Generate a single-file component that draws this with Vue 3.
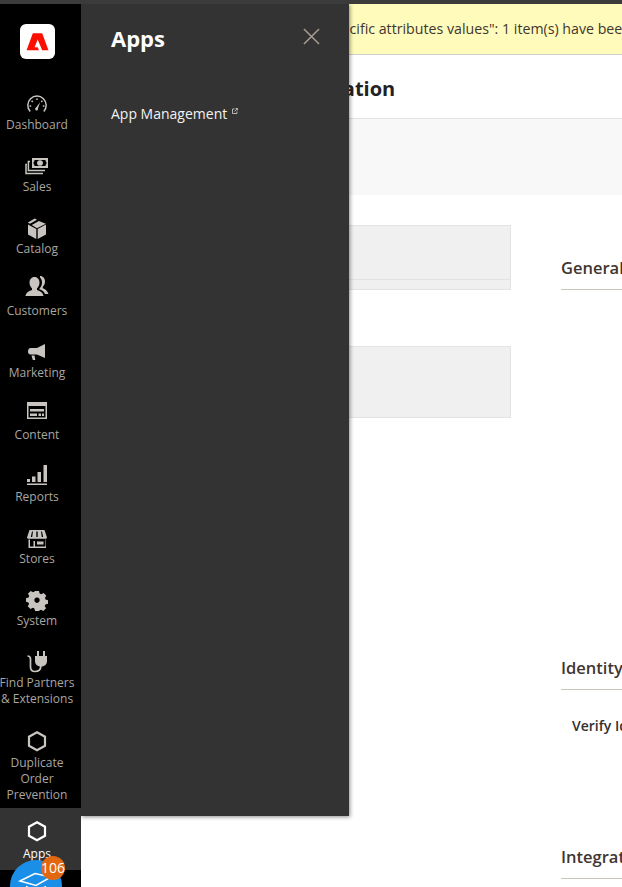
<template>
  <div class="admin">
    <aside class="sidebar">
      <div class="logo">
        <svg viewBox="0 0 24 24" width="25" height="25">
          <path fill="#fa0f00" d="M7.500 4h9l6 16.500h-6l-4.300-10.500-3 7.500h3l1.200 3H1.500z" />
        </svg>
      </div>
      <nav class="menu">
        <a
          v-for="item in menu"
          :key="item.label"
          class="menu-item"
          :class="{ 'is-active': item.active, 'is-tall': item.tall }"
        >
          <svg class="menu-icon" viewBox="0 0 24 24" width="24" height="24">
            <path v-if="item.fill" :d="item.fill" fill="currentColor" fill-rule="evenodd" />
            <path v-if="item.line" :d="item.line" fill="none" stroke="currentColor" :stroke-width="item.sw || 1.5" />
          </svg>
          <span class="menu-label">{{ item.label }}</span>
        </a>
      </nav>
    </aside>

    <main class="content">
      <div class="notice">Task "Update website-specific attributes values": 1 item(s) have been updated</div>
      <h1 class="page-title">Store Configuration</h1>
      <div class="band"></div>
      <div class="columns">
        <div class="col-left">
          <div class="box box-first"><div class="box-foot"></div></div>
          <div class="box box-second"></div>
        </div>
        <div class="col-right">
          <section class="section section-general"><h2>General</h2></section>
          <section class="section section-identity">
            <h2>Identity Verification</h2>
            <div class="field-label">Verify Identity</div>
          </section>
          <section class="section section-integration"><h2>Integration</h2></section>
        </div>
      </div>
    </main>

    <div class="panel">
      <div class="panel-head">
        <strong class="panel-title">Apps</strong>
        <svg class="panel-close" viewBox="0 0 18 18" width="17" height="17">
          <path d="M1 1l16 16M17 1 1 17" fill="none" stroke="#a79d95" stroke-width="1.6" />
        </svg>
      </div>
      <a class="panel-link">
        App Management
        <svg viewBox="0 0 7 7" width="6" height="6" class="ext-icon">
          <path d="M3 1.200H.6v5.200h5.200V4M3 4l3-3M4.200.6h2.200v2.200" fill="none" stroke="#cfcfcf" stroke-width="1" />
        </svg>
      </a>
    </div>

    <div class="fab">
      <svg viewBox="0 0 36 20" width="36" height="20">
        <path d="M2 9 17 1.500 33 5 18 13.500zM8 14.500l10 5 10-5" fill="none" stroke="#fff" stroke-width="1.5" />
      </svg>
    </div>
    <span class="fab-badge">106</span>
  </div>
</template>

<script setup>
const menu = [
  {
    label: 'Dashboard',
    line: 'M5.200 18.500A9.200 9.200 0 1 1 18.800 18.500M12 5.500v1.600M6.600 7.800l1.100 1.100M17.400 7.800l-1.100 1.100M4.600 13h1.600M17.800 13h1.600',
    fill: 'M15.200 9.200 13 15.200a1.500 1.500 0 1 1-2-.6z'
  },
  {
    label: 'Sales',
    fill: 'M7 3h16v10H7zM15 5.200a3 2.800 0 1 0 .01 0zM9.500 5a2 2 0 0 1-1 2v2a2 2 0 0 1 1 2h11a2 2 0 0 1 1-2V7a2 2 0 0 1-1-2z',
    line: 'M5 6.500H3.400v9H20M2 9.500H1v9h17'
  },
  {
    label: 'Catalog',
    fill: 'M3 7.500 11.300 12v10L3 17.500zM21 7.500 12.700 12v10l8.300-4.500zM2.800 5.600 9.800 1.600l2.200 1.200-7 4zM6.800 7.900 13.900 3.900l6.900 2.800-8.800 4.600z'
  },
  {
    label: 'Customers',
    fill: 'M9.500-2c3.200 0 5 2.500 5 5.500 0 2.500-1 4.500-2.500 5.800v1.700c3 1 6 2.500 6.500 6H.5c.5-3.500 3.500-5 6.500-6V9.300C5.500 8 4.500 6 4.500 3.500 4.500.5 6.300-2 9.500-2zM15-3c3 0 5 2.300 5 5.300 0 2.300-.8 4.200-2.200 5.500v1.400c2.500 1 4.700 2.500 5.700 5.800H20c-1-2.500-3-3.800-5.500-4.700V9.500C16 8 17 6 17 3.500c0-2-.7-3.800-2-5z'
  },
  {
    label: 'Marketing',
    fill: 'M20 3v14l-8-3.500H5.500C4 13.500 3 12.300 3 10.500S4 7 5.500 7H12zM6.500 14.500h3l.8 4.500H7.800z'
  },
  {
    label: 'Content',
    fill: 'M2-1h20v17H2zM3.500 3v11.500h17V3zM5 6h14v2.500H5zM5 10.500h7v2.500H5zM13.500 10.500H16V13h-2.500zM17 10.500h2V13h-2z'
  },
  {
    label: 'Reports',
    fill: 'M2 14h3v3H2zM7 11.500h3.500V17H7zM12.500 7H16v10h-3.500zM18.500 0H22v17h-3.500zM2 18.500h20V20H2z'
  },
  {
    label: 'Stores',
    fill: 'M4.500 3h15L22 10.500c0 1-1 1.200-2 1.200H4c-1 0-2-.2-2-1.200zM7 4.500 5.800 10h1.400L8 4.500zM11.300 4.500V10h1.400V4.500zM16 4.500l.8 5.500h1.400L17 4.500zM3.500 12.500H5v7h3.500V14H10v5.500h10.500v-7H21V21H3.500zM12 14.500h6.500v3H12z'
  },
  {
    label: 'System',
    fill: 'M10 2h4l.6 2.600 1.600.7 2.300-1.400 2.800 2.800-1.400 2.300.7 1.600 2.400.6v3.600l-2.600.6-.7 1.600 1.400 2.300-2.800 2.800-2.300-1.400-1.600.7L14 22h-4l-.6-2.600-1.600-.7-2.300 1.400-2.800-2.800 1.400-2.300-.7-1.600L1 12.800V9.200l2.600-.6.700-1.600-1.400-2.300 2.800-2.800L8 3.300l1.600-.7zM12 8.500a2.700 2.700 0 1 0 .01 0z'
  },
  {
    label: 'Find Partners & Extensions',
    fill: 'M12 0h2v5h4V0h2v5h2v5c0 3-2 5.500-6 5.500S10 13 10 10V5h2z',
    line: 'M2.500 5c2 0 3 1 3 3v8c0 3 2 4.500 4.500 4.500 3 0 5.800-1 5.800-5.500',
    sw: 1.7
  },
  {
    label: 'Duplicate Order Prevention',
    line: 'M12 1.200 20 5.700v9.100l-8 4.500-8-4.500V5.700z',
    sw: 2.2,
    tall: true
  },
  {
    label: 'Apps',
    line: 'M12 .2 20 4.700v9.100l-8 4.500-8-4.500V4.700z',
    sw: 2.2,
    active: true
  }
]
</script>

<style>
body {
  margin: 0;
  overflow: hidden;
}
</style>

<style scoped>
.admin {
  position: relative;
  display: flex;
  width: 622px;
  height: 887px;
  overflow: hidden;
  background: #fff;
  font-family: "Open Sans", sans-serif;
  color: #303030;
  border-top: 4px solid #3b3b3b;
  box-sizing: border-box;
}

.sidebar {
  flex: 0 0 81px;
  background: #000;
  position: relative;
  z-index: 3;
}

.logo {
  width: 35px;
  height: 35px;
  margin: 20px 0 20px 20px;
  background: #fff;
  border-radius: 6px;
  display: flex;
  align-items: center;
  justify-content: center;
}

.menu-item {
  display: flex;
  flex-direction: column;
  align-items: center;
  padding: 14px 7px 8px 0;
  color: #aaa6a0;
  font-size: 12px;
  line-height: 16px;
  text-align: center;
}

.menu-item.is-tall {
  padding: 16px 7px 5px 0;
}

.menu-item.is-active {
  background: #333;
  color: #fff;
}

.menu-icon {
  display: block;
  overflow: visible;
}

.menu-item:not(.is-active) .menu-icon {
  color: #c8c5c1;
}

.menu-label {
  display: block;
  margin: 0 -4px;
}

.content {
  flex: 1;
  min-width: 0;
}

.notice {
  height: 50px;
  line-height: 50px;
  padding-left: 98px;
  background: #fffbbb;
  border-bottom: 1px solid #cfcfcf;
  white-space: nowrap;
  font-size: 14.2px;
  color: #41362f;
}

.page-title {
  margin: 0;
  height: 63px;
  line-height: 68px;
  padding-left: 118px;
  font-size: 20px;
  font-weight: 700;
  color: #222;
  white-space: nowrap;
}

.band {
  height: 76px;
  background: #f8f8f8;
  border-top: 1px solid #e3e3e3;
}

.columns {
  display: grid;
  grid-template-columns: 430px 1fr;
  column-gap: 50px;
}

.col-left {
  padding-top: 30px;
}

.box {
  box-sizing: border-box;
  background: #f0f0f0;
  border: 1px solid #e3e3e3;
}

.box-first {
  height: 65px;
  padding-top: 53px;
}

.box-foot {
  border-top: 1px solid #e3e3e3;
}

.box-second {
  height: 72px;
  margin-top: 56px;
}

.col-right {
  white-space: nowrap;
}

.section h2 {
  margin: 0;
  height: 32px;
  line-height: 22px;
  font-size: 16.5px;
  font-weight: 600;
  color: #41362f;
  border-bottom: 1px solid #c9c4bd;
}

.section-general {
  padding-top: 62px;
}

.section-identity {
  padding-top: 367px;
}

.section-integration {
  padding-top: 110px;
}

.field-label {
  margin: 26px 0 0 11px;
  font-size: 14px;
  font-weight: 600;
  line-height: 20px;
  color: #303030;
}

.panel {
  position: absolute;
  left: 81px;
  top: 0;
  width: 268px;
  height: 812px;
  background: #333;
  box-shadow: 1px 1px 4px rgba(0, 0, 0, 0.45);
  z-index: 2;
  padding: 0 30px;
  box-sizing: border-box;
}

.panel-head {
  display: flex;
  align-items: center;
  justify-content: space-between;
  height: 68px;
}

.panel-title {
  font-size: 22px;
  font-weight: 700;
  color: #fff;
}

.panel-close {
  margin-right: -1px;
  margin-bottom: 3px;
}

.panel-link {
  display: block;
  margin-top: 32px;
  font-size: 14px;
  line-height: 20px;
  color: #f2f2f2;
  white-space: nowrap;
}

.ext-icon {
  vertical-align: 5px;
  margin-left: 1px;
}

.fab {
  position: absolute;
  left: 10px;
  top: 856px;
  width: 52px;
  height: 52px;
  border-radius: 50%;
  background: #1b8fe8;
  z-index: 4;
  display: flex;
  justify-content: center;
  padding-top: 12px;
  box-sizing: border-box;
}

.fab-badge {
  position: absolute;
  left: 41px;
  top: 852px;
  width: 24px;
  height: 24px;
  border-radius: 50%;
  background: #e2680f;
  color: #fff;
  font-size: 14px;
  line-height: 24px;
  text-align: center;
  z-index: 5;
}
</style>
